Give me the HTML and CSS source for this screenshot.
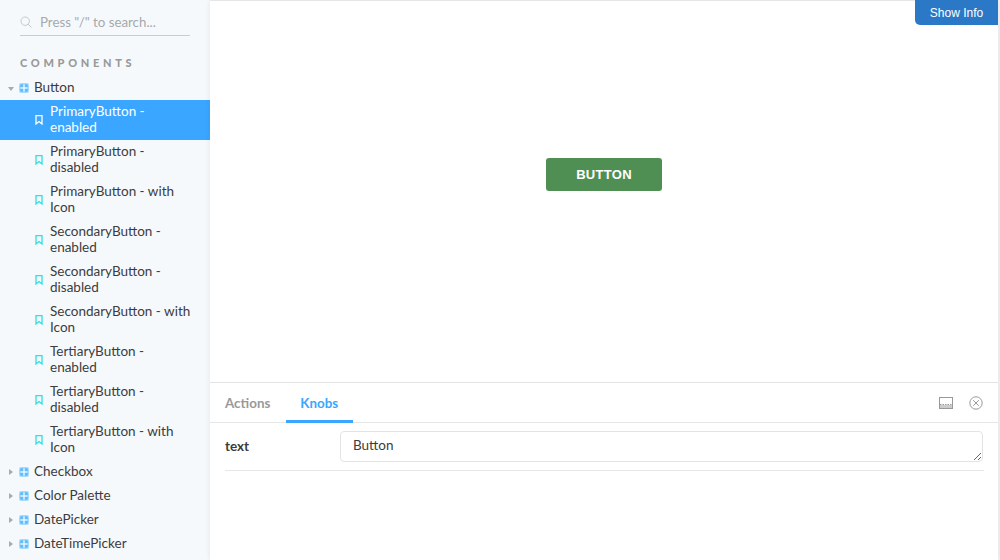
FILE: index.html
```html
<!DOCTYPE html>
<html lang="en">
<head>
<meta charset="utf-8">
<title>Storybook</title>
<link rel="stylesheet" href="styles.css">
</head>
<body>
<div class="app">
  <aside class="sidebar">
    <div class="search">
      <svg class="search-icon" width="12" height="12" viewBox="0 0 12 12"><circle cx="5.2" cy="5.2" r="4.2" fill="none" stroke="#c4c8cc" stroke-width="1"/><path d="M8.2 8.2L11.5 11.5" stroke="#c4c8cc" stroke-width="1"/></svg>
      <span>Press "/" to search...</span>
    </div>
    <div class="heading">COMPONENTS</div>
    <ul class="tree">
      <li class="node"><i class="arrow down"></i><svg class="grid" viewBox="0 0 10 10"><use href="#g"/></svg><span>Button</span></li>
      <li class="story active"><svg class="mark" viewBox="0 0 8 10"><path d="M1 .7h6v8.3L4 6.6 1 9z"/></svg><span>PrimaryButton - enabled</span></li>
      <li class="story"><svg class="mark" viewBox="0 0 8 10"><path d="M1 .7h6v8.3L4 6.6 1 9z"/></svg><span>PrimaryButton - disabled</span></li>
      <li class="story"><svg class="mark" viewBox="0 0 8 10"><path d="M1 .7h6v8.3L4 6.6 1 9z"/></svg><span>PrimaryButton - with Icon</span></li>
      <li class="story"><svg class="mark" viewBox="0 0 8 10"><path d="M1 .7h6v8.3L4 6.6 1 9z"/></svg><span>SecondaryButton - enabled</span></li>
      <li class="story"><svg class="mark" viewBox="0 0 8 10"><path d="M1 .7h6v8.3L4 6.6 1 9z"/></svg><span>SecondaryButton - disabled</span></li>
      <li class="story"><svg class="mark" viewBox="0 0 8 10"><path d="M1 .7h6v8.3L4 6.6 1 9z"/></svg><span>SecondaryButton - with Icon</span></li>
      <li class="story"><svg class="mark" viewBox="0 0 8 10"><path d="M1 .7h6v8.3L4 6.6 1 9z"/></svg><span>TertiaryButton - enabled</span></li>
      <li class="story"><svg class="mark" viewBox="0 0 8 10"><path d="M1 .7h6v8.3L4 6.6 1 9z"/></svg><span>TertiaryButton - disabled</span></li>
      <li class="story"><svg class="mark" viewBox="0 0 8 10"><path d="M1 .7h6v8.3L4 6.6 1 9z"/></svg><span>TertiaryButton - with Icon</span></li>
      <li class="node"><i class="arrow"></i><svg class="grid" viewBox="0 0 10 10"><use href="#g"/></svg><span>Checkbox</span></li>
      <li class="node"><i class="arrow"></i><svg class="grid" viewBox="0 0 10 10"><use href="#g"/></svg><span>Color Palette</span></li>
      <li class="node"><i class="arrow"></i><svg class="grid" viewBox="0 0 10 10"><use href="#g"/></svg><span>DatePicker</span></li>
      <li class="node"><i class="arrow"></i><svg class="grid" viewBox="0 0 10 10"><use href="#g"/></svg><span>DateTimePicker</span></li>
    </ul>
  </aside>
  <main class="main">
    <section class="preview">
      <button class="show-info">Show Info</button>
      <button class="primary">BUTTON</button>
    </section>
    <section class="panel">
      <div class="tabs">
        <div class="tab">Actions</div>
        <div class="tab selected">Knobs</div>
        <div class="tools">
          <svg width="14" height="12" viewBox="0 0 14 12" fill="none" stroke="#999"><rect x=".5" y=".5" width="13" height="11"/><path d="M1 7.5h12" stroke-dasharray="1.5 1"/><path d="M1 9.5h12" stroke-width="3" stroke="#ccc"/></svg>
          <svg width="14" height="14" viewBox="0 0 14 14" fill="none" stroke="#999"><circle cx="7" cy="7" r="6.2"/><path d="M4.2 4.2l5.6 5.6M9.8 4.2l-5.6 5.6"/></svg>
        </div>
      </div>
      <div class="knob">
        <label for="knob-text">text</label>
        <textarea id="knob-text" rows="1">Button</textarea>
      </div>
    </section>
  </main>
</div>
<svg class="defs" width="0" height="0"><defs><g id="g"><rect width="10" height="10" rx="2.2" fill="#a6dbfe"/><path d="M1.2 1.2h3.3v3.3H1.2zM5.5 1.2h3.3v3.3H5.5zM1.2 5.5h3.3v3.3H1.2zM5.5 5.5h3.3v3.3H5.5z" fill="#62bdfd"/><path d="M4.5 1.5h1v7h-1zM1.5 4.5h7v1h-7z" fill="#fff"/></g></defs></svg>
</body>
</html>
```
FILE: styles.css
```css
* { box-sizing: border-box; }
html, body { margin: 0; height: 100%; overflow: hidden; }
body { font-family: Lato, "Noto Sans", sans-serif; font-size: 13.5px; color: #3c3c3c; background: #f0f2f5; }
.defs { display: block; height: 0; }
.app { display: flex; width: 1000px; height: 560px; }

.sidebar { width: 210px; flex: none; background: #f6f9fc; overflow: hidden; padding-top: 10px; }
.search { display: flex; align-items: center; gap: 8px; height: 26px; margin: 0 20px; border-bottom: 1px solid #c9cdd1; color: #a5a9ad; font-size: 13.3px; padding-bottom: 2px; }
.search-icon { flex: none; }
.heading { margin: 20px 0 0 20px; height: 14px; line-height: 14px; font-size: 11px; font-weight: 900; letter-spacing: 3.7px; color: #999; }
.tree { list-style: none; margin: 6px 0 0; padding: 0; }
.node { display: flex; align-items: center; height: 24px; padding-left: 8px; }
.node span { margin-bottom: 3px; }
.node .grid { margin-bottom: 1px; }
.arrow { display: block; width: 6px; height: 6px; flex: none; position: relative; }
.arrow::after { content: ""; position: absolute; left: 1px; top: 0; border-style: solid; border-width: 3.5px 0 3.5px 4px; border-color: transparent transparent transparent #aaa; }
.arrow.down::after { left: 0; top: 2px; border-width: 4px 3.5px 0 3.5px; border-color: #aaa transparent transparent transparent; }
.grid { width: 10px; height: 10px; margin: 0 5px 0 5px; flex: none; }
.story { display: flex; align-items: center; height: 40px; padding: 0 18px 0 35px; line-height: 16px; }
.story span { flex: 1; margin-bottom: 2px; }
.mark { width: 8px; height: 10px; margin-right: 7px; flex: none; fill: none; stroke: #2fe0e0; stroke-width: 1.3; }
.story.active { background: #3aa6ff; color: #fff; }
.story.active .mark { stroke: #fff; }

.main { width: 788px; flex: none; display: flex; flex-direction: column; background: #fff; border-top: 1px solid #e6e6e6; box-shadow: 0 0 6px rgba(0,0,0,.08); }
.preview { position: relative; height: 381px; display: flex; justify-content: center; align-items: flex-start; padding-top: 157px; flex: none; }
.show-info { position: absolute; top: -1px; right: 0; width: 83px; height: 25px; border: 0; padding: 0; border-radius: 0 0 0 5px; background: #2b78c6; color: #fff; font: 12px "Liberation Sans", Arial, sans-serif; }
.primary { width: 116px; height: 33px; border: 0; border-radius: 3px; background: #508f53; color: #fff; font: 700 13px "Liberation Sans", Arial, sans-serif; letter-spacing: .3px; }

.panel { flex: 1; border-top: 1px solid #e3e3e3; }
.tabs { display: flex; align-items: stretch; height: 40px; border-bottom: 1px solid #e6e6e6; }
.tab { display: flex; align-items: center; padding: 0 15px; font-size: 13.4px; font-weight: 700; color: #999; margin-bottom: -1px; }
.tab.selected { color: #3aa6ff; border-bottom: 3px solid #3aa6ff; padding: 3px 15px 0 14px; margin-left: 1px; }
.tools { margin-left: auto; display: flex; align-items: center; gap: 16px; padding-right: 15px; }
.knob { display: flex; align-items: flex-start; margin: 0 14px 0 15px; padding: 8px 0 8px; border-bottom: 1px solid #e6e6e6; }
.knob label { width: 115px; flex: none; font-weight: 700; font-size: 13.5px; line-height: 30px; }
.knob textarea { flex: none; width: 643px; display: block; height: 31px; margin: 0; padding: 5px 12px; border: 1px solid #e4e4e4; border-radius: 4px; font: 13.5px/16px Lato, sans-serif; color: #3c3c3c; background: #fff; outline: 0; resize: vertical; }
```
